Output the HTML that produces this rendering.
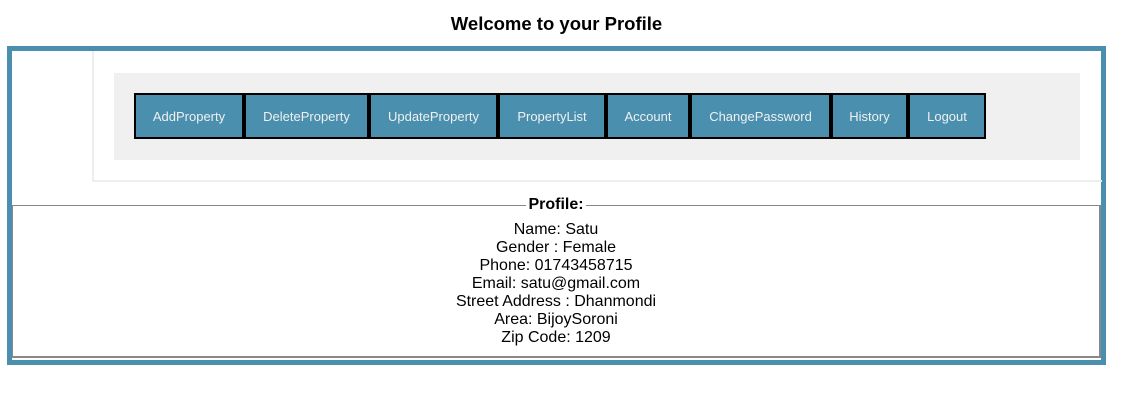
<!DOCTYPE html>
<html><head><style>
body{margin:0;width:1127px;height:401px;background:#fff;font-family:"Liberation Sans",Arial,sans-serif;position:relative;overflow:hidden}
h1{position:absolute;left:0;width:1113px;top:12px;margin:0;text-align:center;font-size:18.5px;font-weight:bold;color:#000;line-height:24px}
.outer{position:absolute;left:7px;top:46px;width:1089px;height:309px;border:5px solid #4a8fae;background:#fff}
.nav{position:absolute;left:80px;top:0;width:1010px;height:131px;border-left:2px solid #eee;border-bottom:2px solid #eee;box-sizing:border-box}
.panel{position:absolute;left:102px;top:22px;width:966px;height:87px;background:#f0f0f0}
.btn{position:absolute;top:42px;height:46px;box-sizing:border-box;border:2px solid #000;background:#4a8fae;color:#f0f0f0;font-size:13px;display:flex;align-items:center;justify-content:center}
fieldset{position:absolute;left:0;top:145px;width:1089px;height:162px;box-sizing:border-box;margin:0;padding:0;border-left:1px solid #888;border-top:1px solid #888;border-right:2px solid #888;border-bottom:2px solid #888;text-align:center}
legend{font-weight:bold;font-size:16px;padding:0 2px;margin:0 auto;line-height:18px}
.info{font-size:16px;line-height:18px;margin-top:7px}
</style></head><body>
<h1>Welcome to your Profile</h1>
<div class="outer">
<div class="nav"></div>
<div class="panel"></div>
<div class="btn" style="left:122px;width:110px">AddProperty</div>
<div class="btn" style="left:232px;width:125px">DeleteProperty</div>
<div class="btn" style="left:357px;width:129px">UpdateProperty</div>
<div class="btn" style="left:486px;width:108px">PropertyList</div>
<div class="btn" style="left:594px;width:84px">Account</div>
<div class="btn" style="left:678px;width:141px">ChangePassword</div>
<div class="btn" style="left:819px;width:77px">History</div>
<div class="btn" style="left:896px;width:78px">Logout</div>
<fieldset><legend>Profile:</legend>
<div class="info">Name: Satu<br>Gender : Female<br>Phone: 01743458715<br>Email: satu@gmail.com<br>Street Address : Dhanmondi<br>Area: BijoySoroni<br>Zip Code: 1209</div>
</fieldset>
</div>
</body></html>
